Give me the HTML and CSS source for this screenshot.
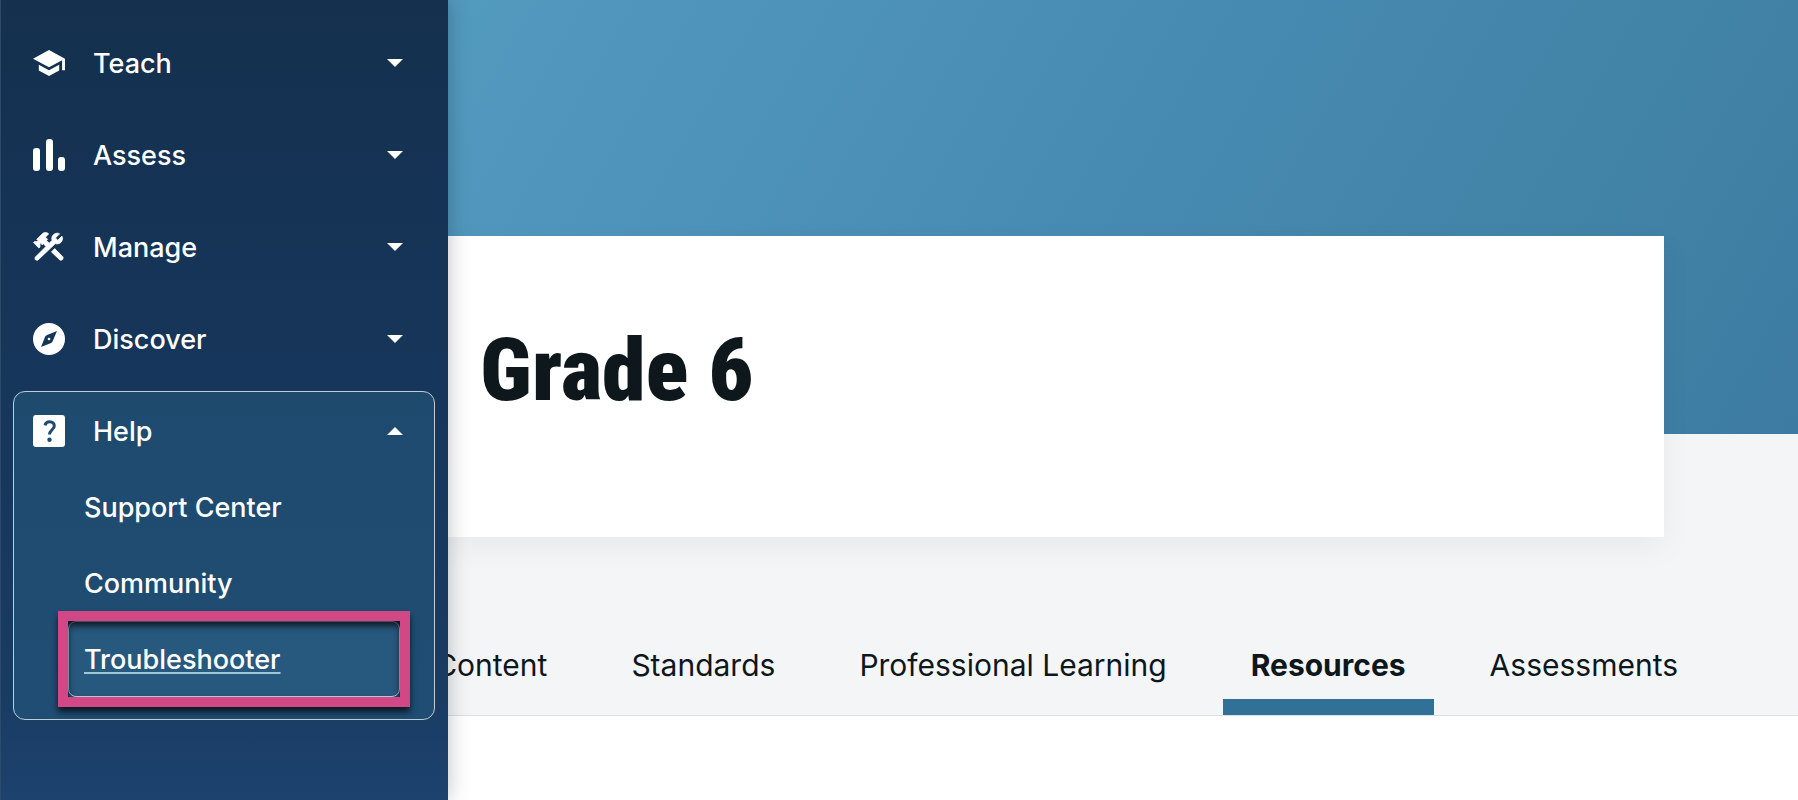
FILE: index.html
```html
<!DOCTYPE html>
<html lang="en">
<head>
  <meta charset="UTF-8">
  <meta name="viewport" content="width=device-width, initial-scale=1.0">
  <title>Grade 6 - Resources</title>
  <link rel="stylesheet" href="styles.css">
</head>
<body>

  <div class="layout">
    <nav class="sidebar" aria-label="Main menu">
      <div class="menu-group">
        <button class="menu-button" type="button" aria-expanded="false">
          <svg class="menu-icon" viewBox="1 1 22 22" aria-hidden="true">
            <path d="M5 13.18v4L12 21l7-3.82v-4L12 17l-7-3.82zM12 3L1 9l11 6 9-4.91V17h2V9L12 3z"/>
          </svg>
          <span class="menu-label">Teach</span>
          <svg class="caret" viewBox="0 0 16 8" aria-hidden="true"><path d="M0 0h16L8 8z"/></svg>
        </button>
      </div>

      <div class="menu-group">
        <button class="menu-button" type="button" aria-expanded="false">
          <svg class="menu-icon" viewBox="0 0 32 32" aria-hidden="true">
            <rect x="0" y="9" width="7" height="23" rx="3"/>
            <rect x="13" y="0" width="7" height="32" rx="3"/>
            <rect x="25" y="18" width="7" height="14" rx="3"/>
          </svg>
          <span class="menu-label">Assess</span>
          <svg class="caret" viewBox="0 0 16 8" aria-hidden="true"><path d="M0 0h16L8 8z"/></svg>
        </button>
      </div>

      <div class="menu-group">
        <button class="menu-button" type="button" aria-expanded="false">
          <svg class="menu-icon icon-tools" viewBox="1.8 1.6 20.8 20.8" aria-hidden="true">
            <path d="M13.783 15.172l2.121-2.121 5.4 5.4q.5 1.6-1 2.1l-.9 0zM17.5 10c1.93 0 3.5-1.57 3.5-3.5 0-.58-.16-1.12-.41-1.6l-2.7 2.7-1.49-1.49 2.7-2.7c-.48-.25-1.02-.41-1.6-.41C15.57 3 14 4.57 14 6.5c0 .41.08.8.21 1.16l-1.85 1.85-1.78-1.78.71-.71-1.41-1.41L12 3.49c-1.17-1.17-3.07-1.17-4.24 0L4.22 7.03l1.41 1.41H2.81L2.1 9.15l3.54 3.54.71-.71V9.15l1.41 1.41.71-.71 1.78 1.78-7.1 7.1q-.4 2.2 1.81 1.81L16.34 9.79c.36.13.75.21 1.16.21z"/>
          </svg>
          <span class="menu-label">Manage</span>
          <svg class="caret" viewBox="0 0 16 8" aria-hidden="true"><path d="M0 0h16L8 8z"/></svg>
        </button>
      </div>

      <div class="menu-group">
        <button class="menu-button" type="button" aria-expanded="false">
          <svg class="menu-icon" viewBox="0 0 32 32" aria-hidden="true">
            <path fill-rule="evenodd" d="M16 0a16 16 0 1 0 0 32a16 16 0 1 0 0-32zM24 8l-4.5 10.5q-.4 1-1.4 1.4L8 24l4-10q.5-1.2 1.6-1.8z"/>
            <circle cx="16" cy="16" r="1.3"/>
          </svg>
          <span class="menu-label">Discover</span>
          <svg class="caret" viewBox="0 0 16 8" aria-hidden="true"><path d="M0 0h16L8 8z"/></svg>
        </button>
      </div>

      <div class="menu-group open">
        <button class="menu-button" type="button" aria-expanded="true">
          <svg class="menu-icon" viewBox="0 0 32 32" aria-hidden="true">
            <rect width="32" height="32" rx="3"/>
            <path class="question" d="M12 10.3C12.6 7.9 14.3 6.8 16.7 6.8C19.5 6.8 21.3 8.5 21.3 10.9C21.3 14.5 16.5 15.2 16.5 19.5"/>
            <circle class="question-dot" cx="16.5" cy="24.7" r="2.2"/>
          </svg>
          <span class="menu-label">Help</span>
          <svg class="caret" viewBox="0 0 16 8" aria-hidden="true"><path d="M0 8h16L8 0z"/></svg>
        </button>
        <div class="submenu">
          <a href="#support">Support Center</a>
          <a href="#community">Community</a>
          <a href="#troubleshooter" class="highlighted">Troubleshooter</a>
        </div>
      </div>
    </nav>

    <main class="content">
      <div class="hero"></div>
      <header class="title-card">
        <h1>Grade 6</h1>
      </header>
      <nav class="tabs" aria-label="Program sections">
        <a href="#content">Content</a>
        <a href="#standards">Standards</a>
        <a href="#learning">Professional Learning</a>
        <a href="#resources" class="active" aria-current="page">Resources</a>
        <a href="#assessments">Assessments</a>
      </nav>
    </main>
  </div>

</body>
</html>
```
FILE: styles.css
```css
* {
  box-sizing: border-box;
}

body {
  margin: 0;
  font-family: Inter, "Open Sans", sans-serif;
  background-color: #fff;
  color: #0d171c;
}

.layout {
  display: grid;
  grid-template-columns: 448px minmax(0, 1fr);
  min-height: 100vh;
}

/* Sidebar */
.sidebar {
  position: relative;
  z-index: 1;
  display: flex;
  flex-direction: column;
  gap: 12px;
  padding: 23px 13px 0 12px;
  border-left: 1px solid #2d4a68;
  background: linear-gradient(#14304e, #16365b 50%, #193c63 88%, #1c426e);
  box-shadow: 0 0 20px rgba(0, 0, 0, 0.25);
}

.menu-group {
  padding: 1px;
  border: 1px solid transparent;
  border-radius: 12px;
}

.menu-group.open {
  padding-bottom: 22px;
  border-color: #c0ccd6;
  background: linear-gradient(#1e4a6e, #204d73);
}

.menu-button {
  display: flex;
  align-items: center;
  width: 100%;
  height: 76px;
  padding: 0 30px 0 18px;
  border: none;
  background: none;
  color: #fff;
  font-family: inherit;
  font-size: 27px;
  font-weight: 500;
  text-align: left;
  cursor: pointer;
}

.menu-icon {
  width: 32px;
  height: 32px;
  margin-right: 28px;
  fill: #fff;
}

.icon-tools {
  stroke: #fff;
  stroke-width: 0.5;
  stroke-linejoin: round;
}

.question {
  fill: none;
  stroke: #1e4a6e;
  stroke-width: 3;
}

.question-dot {
  fill: #1e4a6e;
}

.menu-label {
  flex: 1;
}

.caret {
  width: 16px;
  height: 8px;
  fill: #fff;
}

.submenu {
  padding: 0 33px 0 53px;
}

.submenu a {
  display: flex;
  align-items: center;
  height: 76px;
  padding-left: 15px;
  border: 1px solid transparent;
  border-radius: 8px;
  color: #fff;
  font-size: 27px;
  font-weight: 500;
  text-decoration: none;
}

.submenu .highlighted {
  position: relative;
  border-color: #c0ccd6;
  background-color: #27587e;
  text-decoration: underline;
  text-decoration-color: #9fc5d8;
  text-decoration-thickness: 2px;
  text-underline-offset: 3px;
}

.highlighted::after {
  content: "";
  position: absolute;
  inset: -11px;
  border: 10px solid #d24785;
  filter: drop-shadow(0 5px 3px rgba(0, 0, 0, 0.7));
  pointer-events: none;
}

/* Main area */
.content {
  overflow: hidden;
}

.hero {
  height: 434px;
  background: linear-gradient(120deg, #539abf, #478ab1 50%, #4183a6 80%, #3d7ba2);
}

.title-card {
  position: relative;
  height: 301px;
  margin: -198px 134px 0 0;
  padding: 74px 32px;
  background-color: #fff;
  box-shadow: 0 10px 30px rgba(0, 0, 0, 0.05);
}

h1 {
  margin: 0;
  font-family: "Roboto Condensed", Roboto, sans-serif;
  font-size: 88px;
  font-weight: 900;
  line-height: 120px;
}

.tabs {
  display: flex;
  justify-content: flex-end;
  gap: 28px;
  margin-top: -103px;
  padding: 196px 92px 0 0;
  border-bottom: 1px solid #dae1e6;
  background-color: #f4f5f7;
}

.tabs a {
  padding: 15px 28px 14px;
  border-bottom: 16px solid transparent;
  color: #0d171c;
  font-size: 30px;
  line-height: 40px;
  text-decoration: none;
  white-space: nowrap;
}

.tabs .active {
  border-bottom-color: #317197;
  font-weight: 700;
}
```
